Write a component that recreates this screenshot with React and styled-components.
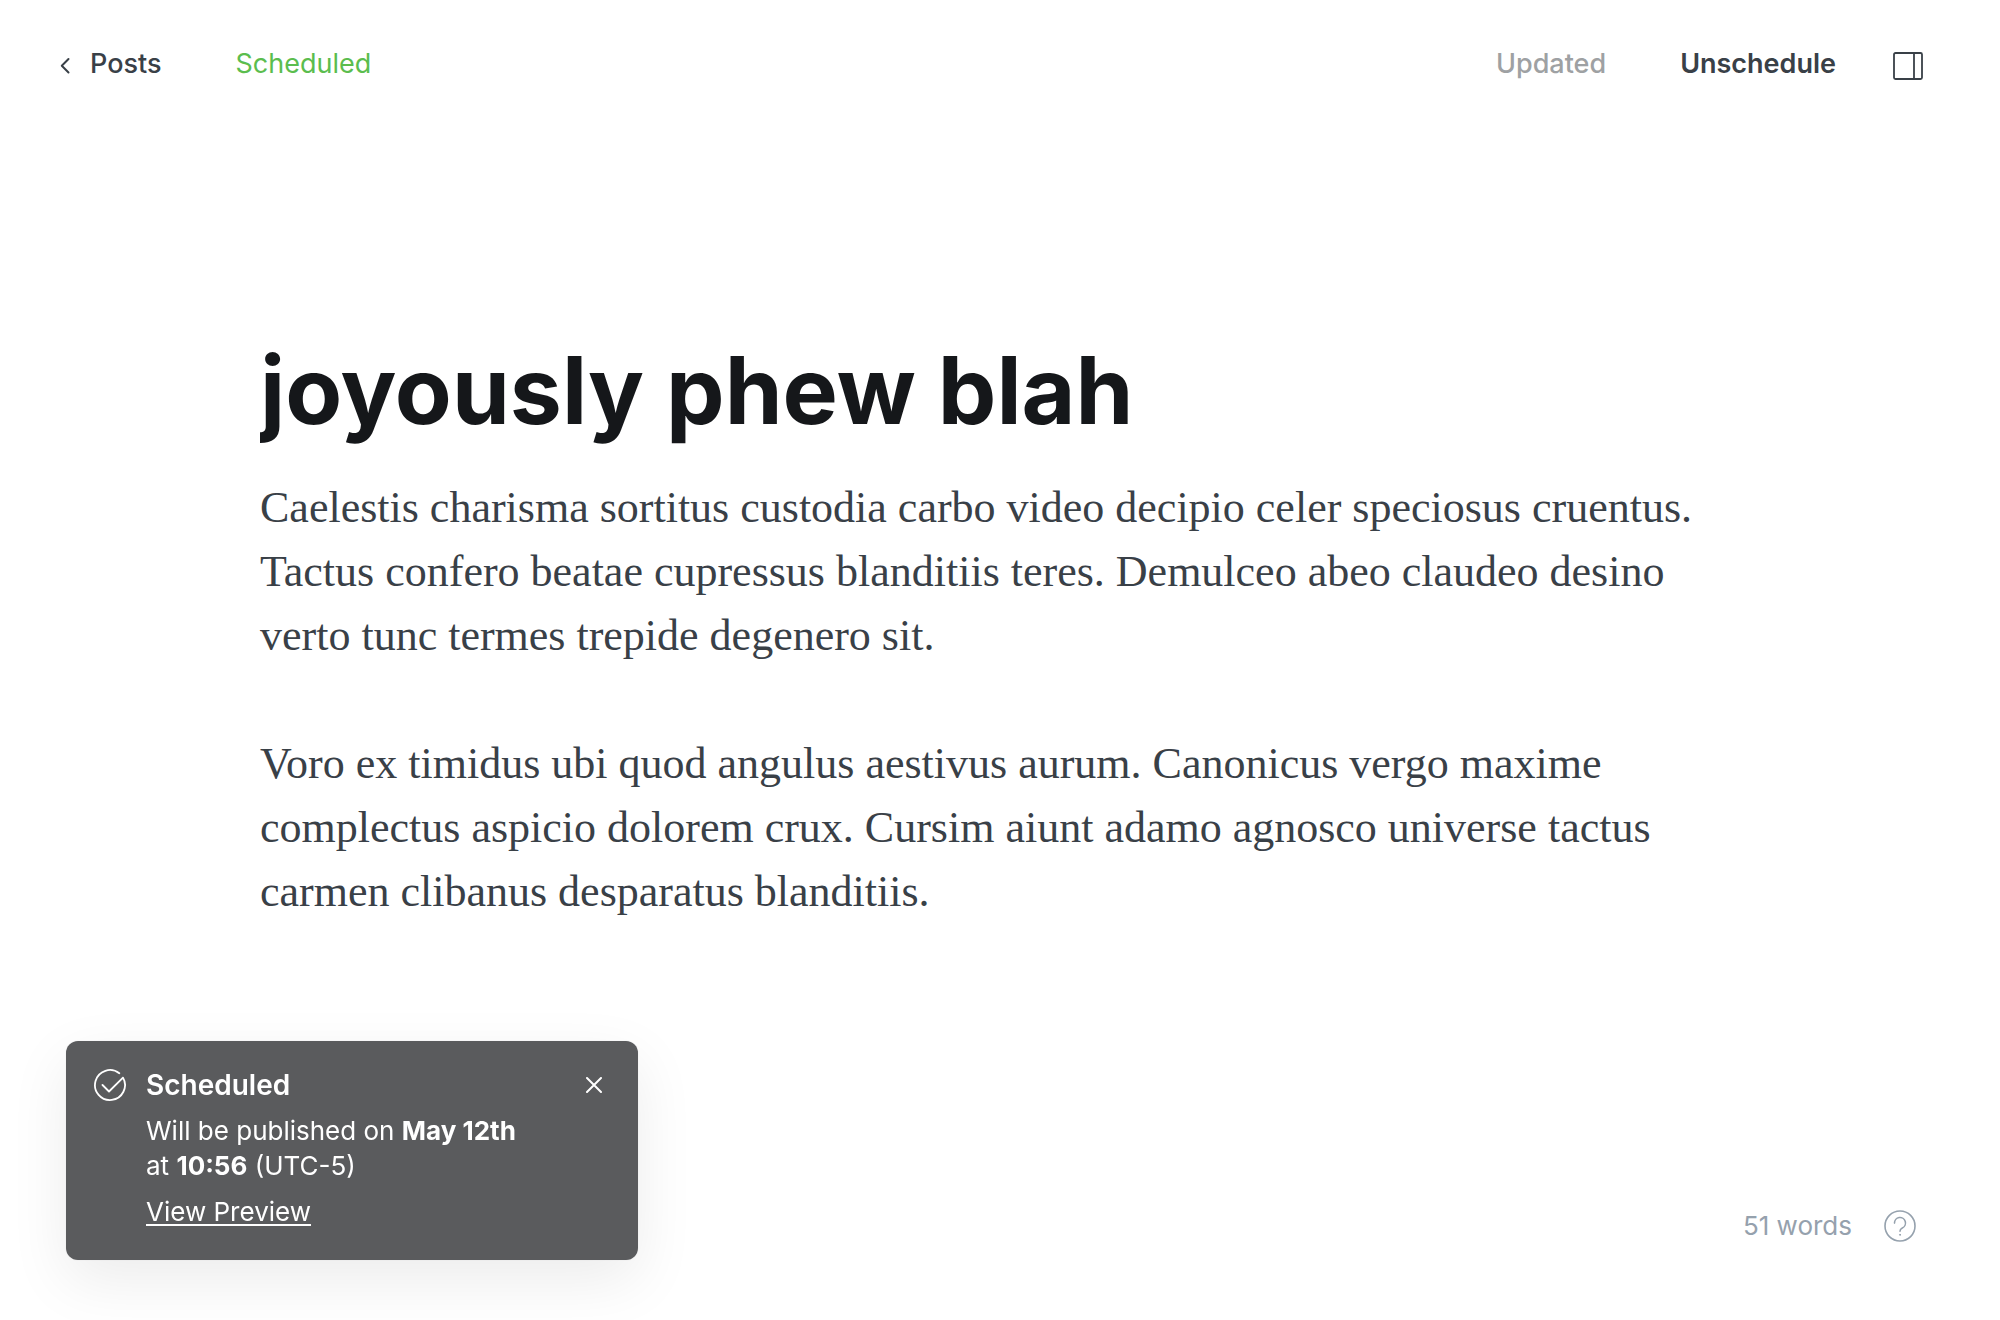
import React, { useState } from "react";
import styled, { createGlobalStyle } from "styled-components";

const sans = 'Inter, "Liberation Sans", sans-serif';
const serif = 'Georgia, "Liberation Serif", serif';

const GlobalStyle = createGlobalStyle`
  *, *::before, *::after { box-sizing: border-box; }
  body { margin: 0; background: #fff; color: #394047; font-family: ${sans}; }
  button { border: 0; padding: 0; background: none; color: inherit; font: inherit; cursor: pointer; }
  svg { display: block; fill: none; stroke: currentColor; }
`;

const Page = styled.div`
  display: flex;
  flex-direction: column;
  min-height: 100vh;
`;

const Toolbar = styled.header`
  display: flex;
  justify-content: space-between;
  align-items: center;
  height: 128px;
  padding: 0 76px 0 60px;
  font-size: 27px;
  line-height: 36px;
`;

const ToolbarGroup = styled.div`
  display: flex;
  align-items: center;
  gap: ${(p) => p.$gap}px;
`;

const BackLink = styled.a`
  display: flex;
  align-items: center;
  gap: 18px;
  color: inherit;
  font-weight: 500;
  text-decoration: none;
`;

const Status = styled.span`
  color: #5bbd4e;
`;

const ToolbarButton = styled.button`
  font-weight: ${(p) => (p.$muted ? 500 : 600)};
  color: ${(p) => (p.$muted ? "#9ea1a3" : "#394047")};
`;

const IconButton = styled.button`
  display: flex;
  flex: none;
`;

const Editor = styled.main`
  flex: 1;
  width: 100%;
  max-width: 1480px;
  margin: 0 auto;
  padding-top: 204px;
`;

const TitleInput = styled.input`
  display: block;
  width: 100%;
  height: 116px;
  padding: 0;
  border: 0;
  outline: 0;
  background: transparent;
  color: #15171a;
  font-family: ${sans};
  font-size: 93px;
  font-weight: 700;
`;

const Body = styled.article`
  margin-top: 28px;
  font-family: ${serif};
  font-size: 44px;
  line-height: 64px;
`;

const Paragraph = styled.p`
  margin: 0 0 64px;
`;

const Line = styled.span`
  display: block;
`;

const Footer = styled.footer`
  display: flex;
  justify-content: flex-end;
  align-items: center;
  gap: 32px;
  padding: 0 84px 76px;
  color: #95a1ad;
  font-size: 26px;
  line-height: 36px;
`;

const Toast = styled.aside`
  position: fixed;
  left: 66px;
  bottom: 60px;
  display: grid;
  grid-template-columns: 32px 1fr 16px;
  align-items: start;
  column-gap: 20px;
  width: 572px;
  padding: 26px 36px 31px 28px;
  border-radius: 12px;
  background: #5a5b5d;
  color: #fff;
  font-size: 26px;
  line-height: 35px;
  box-shadow: 0 0 2px rgba(0, 0, 0, 0.08), 0 20px 60px rgba(0, 0, 0, 0.08);
`;

const ToastIcon = styled.div`
  padding-top: 2px;
`;

const ToastTitle = styled.h2`
  margin: 0 0 10px;
  font-size: 28px;
  font-weight: 600;
  line-height: 36px;
`;

const ToastText = styled.p`
  margin: 0 0 11px;
`;

const ToastLink = styled.a`
  color: inherit;
  text-underline-offset: 3px;
  text-decoration-thickness: 2px;
`;

const CloseButton = styled(IconButton)`
  margin-top: 10px;
`;

const paragraphs = [
  [
    "Caelestis charisma sortitus custodia carbo video decipio celer speciosus cruentus.",
    "Tactus confero beatae cupressus blanditiis teres. Demulceo abeo claudeo desino",
    "verto tunc termes trepide degenero sit.",
  ],
  [
    "Voro ex timidus ubi quod angulus aestivus aurum. Canonicus vergo maxime",
    "complectus aspicio dolorem crux. Cursim aiunt adamo agnosco universe tactus",
    "carmen clibanus desparatus blanditiis.",
  ],
];

const ChevronIcon = () => (
  <svg width="12" height="20" viewBox="0 0 12 20" strokeWidth="2" strokeLinecap="round" strokeLinejoin="round" aria-hidden="true">
    <path d="M8.5 5 1.8 11.8l6.7 6.700" />
  </svg>
);

const SidebarIcon = () => (
  <svg width="32" height="32" viewBox="0 0 32 32" strokeWidth="1.8" strokeLinejoin="round" aria-hidden="true">
    <rect x="2" y="5" width="28" height="26" rx="1.5" />
    <path d="M22 5v26" />
  </svg>
);

const CheckIcon = () => (
  <svg width="32" height="32" viewBox="0 0 32 32" strokeWidth="1.8" strokeLinecap="round" strokeLinejoin="round" aria-hidden="true">
    <path d="M25.3 4.3A15 15 0 1 0 29 8.6L15 22.5 8.5 16" />
  </svg>
);

const CloseIcon = () => (
  <svg width="16" height="16" viewBox="0 0 16 16" strokeWidth="2" strokeLinecap="round" aria-hidden="true">
    <path d="M1 1l14 14M15 1 1 15" />
  </svg>
);

const HelpIcon = () => (
  <svg width="32" height="32" viewBox="0 0 32 32" strokeWidth="1.6" strokeLinecap="round" strokeLinejoin="round" aria-hidden="true">
    <circle cx="16" cy="16" r="15" />
    <path d="M10.5 13.1a5.5 5.5 0 1 1 7.8 4.9c-1.6.8-2.3 1.5-2.3 3.2" />
    <circle cx="16" cy="24.8" r="0.5" fill="currentColor" strokeWidth="1" />
  </svg>
);

export default function App() {
  const [title, setTitle] = useState("joyously phew blah");
  const [toastOpen, setToastOpen] = useState(true);

  return (
    <Page>
      <GlobalStyle />
      <Toolbar>
        <ToolbarGroup $gap={74}>
          <BackLink href="#posts">
            <ChevronIcon />
            Posts
          </BackLink>
          <Status>Scheduled</Status>
        </ToolbarGroup>
        <ToolbarGroup $gap={56}>
          <ToolbarGroup $gap={74}>
            <ToolbarButton type="button" $muted>Updated</ToolbarButton>
            <ToolbarButton type="button">Unschedule</ToolbarButton>
          </ToolbarGroup>
          <IconButton type="button" aria-label="Settings">
            <SidebarIcon />
          </IconButton>
        </ToolbarGroup>
      </Toolbar>

      <Editor>
        <TitleInput aria-label="Post title" value={title} onChange={(e) => setTitle(e.target.value)} />
        <Body>
          {paragraphs.map((lines) => (
            <Paragraph key={lines[0]}>
              {lines.map((line) => (
                <Line key={line}>{line}</Line>
              ))}
            </Paragraph>
          ))}
        </Body>
      </Editor>

      <Footer>
        <span>51 words</span>
        <IconButton type="button" aria-label="Help">
          <HelpIcon />
        </IconButton>
      </Footer>

      {toastOpen && (
        <Toast role="status">
          <ToastIcon>
            <CheckIcon />
          </ToastIcon>
          <div>
            <ToastTitle>Scheduled</ToastTitle>
            <ToastText>
              Will be published on <strong>May 12th</strong>
              <br />
              at <strong>10:56</strong> (UTC-5)
            </ToastText>
            <ToastLink href="#preview">View Preview</ToastLink>
          </div>
          <CloseButton type="button" aria-label="Close" onClick={() => setToastOpen(false)}>
            <CloseIcon />
          </CloseButton>
        </Toast>
      )}
    </Page>
  );
}
